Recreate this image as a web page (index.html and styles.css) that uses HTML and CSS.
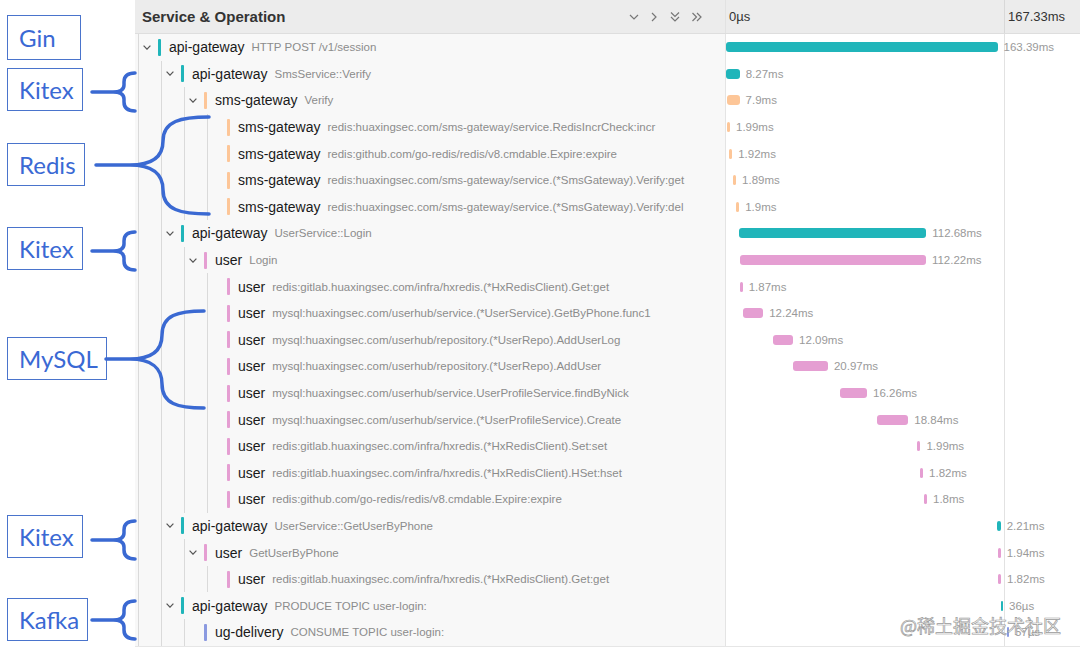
FILE: index.html
```html
<!DOCTYPE html>
<html lang="en">
  <head>
    <meta charset="utf-8" />
    <meta name="viewport" content="width=device-width, initial-scale=1" />
    <title>Trace Timeline</title>
    <link rel="stylesheet" href="styles.css">
  </head>
  <body>
    <div class="canvas">
      <!-- Framework notes on the left -->
      <div class="notes">
        <div class="note note-gin">Gin</div>
        <div class="note note-kitex-1">Kitex</div>
        <div class="note note-redis">Redis</div>
        <div class="note note-kitex-2">Kitex</div>
        <div class="note note-mysql">MySQL</div>
        <div class="note note-kitex-3">Kitex</div>
        <div class="note note-kafka">Kafka</div>
      </div>

      <div class="trace">
        <div class="trace-header">
          <div class="header-name">
            <span class="header-title">Service &amp; Operation</span>
            <div class="header-tools">
              <svg width="10" height="12" viewBox="0 0 10 12"><polyline points="1,4 5,8 9,4" /></svg>
              <svg width="10" height="12" viewBox="0 0 10 12"><polyline points="3,2 7,6 3,10" /></svg>
              <svg width="12" height="12" viewBox="0 0 12 12"><polyline points="2,1.5 6,5.5 10,1.5" /><polyline points="2,6 6,10 10,6" /></svg>
              <svg width="12" height="12" viewBox="0 0 12 12"><polyline points="1.5,2 5.5,6 1.5,10" /><polyline points="6,2 10,6 6,10" /></svg>
            </div>
          </div>
          <div class="header-timeline">
            <span class="header-start">0µs</span>
            <span class="header-end">167.33ms</span>
          </div>
        </div>
        <div id="traceRows" class="trace-rows"></div>
      </div>

      <!-- Braces pointing at the spans -->
      <svg class="braces" width="1080" height="655" viewBox="0 0 1080 655">
        <defs>
          <path id="smallBrace" d="M92,92 L113,92 M135,73 Q124,73 124,82 L124,85 Q124,92 113,92 Q124,92 124,99 L124,102 Q124,111 135,111" />
        </defs>
        <use href="#smallBrace" />
        <use href="#smallBrace" y="159" />
        <use href="#smallBrace" y="448" />
        <use href="#smallBrace" y="528" />
        <path d="M96,165 L132,165 M209,117 C181,117 163,121 163,141 C163,157 152,165 130,165 M209,214 C181,214 163,210 163,190 C163,174 152,165 130,165" />
        <path d="M106,359 L134,359 M204,311 C178,311 162,315 162,335 C162,351 151,359 130,359 M204,408 C178,408 162,404 162,384 C162,368 151,359 130,359" />
      </svg>

      <div class="watermark">@稀土掘金技术社区</div>
    </div>

    <script>
      const scale = 278 / 167.33;

      // level, has children, service, operation, color, start (ms), duration (ms), label
      const spans = [
        [0, true, "api-gateway", "HTTP POST /v1/session", "gateway", 0, 163.39, "163.39ms"],
        [1, true, "api-gateway", "SmsService::Verify", "gateway", 0, 8.27, "8.27ms"],
        [2, true, "sms-gateway", "Verify", "sms", 0.3, 7.9, "7.9ms"],
        [3, false, "sms-gateway", "redis:huaxingsec.com/sms-gateway/service.RedisIncrCheck:incr", "sms", 0.4, 1.99, "1.99ms"],
        [3, false, "sms-gateway", "redis:github.com/go-redis/redis/v8.cmdable.Expire:expire", "sms", 1.8, 1.92, "1.92ms"],
        [3, false, "sms-gateway", "redis:huaxingsec.com/sms-gateway/service.(*SmsGateway).Verify:get", "sms", 4.2, 1.89, "1.89ms"],
        [3, false, "sms-gateway", "redis:huaxingsec.com/sms-gateway/service.(*SmsGateway).Verify:del", "sms", 6.0, 1.9, "1.9ms"],
        [1, true, "api-gateway", "UserService::Login", "gateway", 7.8, 112.68, "112.68ms"],
        [2, true, "user", "Login", "user", 8.1, 112.22, "112.22ms"],
        [3, false, "user", "redis:gitlab.huaxingsec.com/infra/hxredis.(*HxRedisClient).Get:get", "user", 8.2, 1.87, "1.87ms"],
        [3, false, "user", "mysql:huaxingsec.com/userhub/service.(*UserService).GetByPhone.func1", "user", 10.2, 12.24, "12.24ms"],
        [3, false, "user", "mysql:huaxingsec.com/userhub/repository.(*UserRepo).AddUserLog", "user", 28.3, 12.09, "12.09ms"],
        [3, false, "user", "mysql:huaxingsec.com/userhub/repository.(*UserRepo).AddUser", "user", 40.4, 20.97, "20.97ms"],
        [3, false, "user", "mysql:huaxingsec.com/userhub/service.UserProfileService.findByNick", "user", 68.6, 16.26, "16.26ms"],
        [3, false, "user", "mysql:huaxingsec.com/userhub/service.(*UserProfileService).Create", "user", 90.9, 18.84, "18.84ms"],
        [3, false, "user", "redis:gitlab.huaxingsec.com/infra/hxredis.(*HxRedisClient).Set:set", "user", 115, 1.99, "1.99ms"],
        [3, false, "user", "redis:gitlab.huaxingsec.com/infra/hxredis.(*HxRedisClient).HSet:hset", "user", 116.8, 1.82, "1.82ms"],
        [3, false, "user", "redis:github.com/go-redis/redis/v8.cmdable.Expire:expire", "user", 119.2, 1.8, "1.8ms"],
        [1, true, "api-gateway", "UserService::GetUserByPhone", "gateway", 163.1, 2.21, "2.21ms"],
        [2, true, "user", "GetUserByPhone", "user", 163.4, 1.94, "1.94ms"],
        [3, false, "user", "redis:gitlab.huaxingsec.com/infra/hxredis.(*HxRedisClient).Get:get", "user", 163.7, 1.82, "1.82ms"],
        [1, true, "api-gateway", "PRODUCE TOPIC user-login:", "gateway", 165.5, 0.036, "36µs"],
        [2, false, "ug-delivery", "CONSUME TOPIC user-login:", "delivery", 169.1, 0.057, "57µs"],
      ];

      const chevron = `<svg width="8" height="5" viewBox="0 0 8 5"><polyline points="0.6,0.6 4,4.2 7.4,0.6" /></svg>`;

      // Render span rows
      const renderRows = () => {
        let rows = "";
        spans.forEach(([level, parent, service, op, color, start, dur, label]) => {
          let guides = "";
          for (let i = 0; i <= level; i++) {
            guides += `<span class="guide">${parent && i === level ? chevron : ""}</span>`;
          }
          const left = (start * scale).toFixed(1);
          const width = Math.max(2, dur * scale).toFixed(1);
          rows += `<div class="row">
<div class="row-name">
${guides}
<span class="span-mark ${color}"></span>
<span class="service">${service}</span>
<span class="operation">${op}</span>
</div>
<div class="row-timeline">
<span class="bar ${color}" style="margin-left: ${left}px; width: ${width}px"></span>
<span class="bar-label">${label}</span>
</div>
</div>`;
        });
        document.getElementById("traceRows").innerHTML = rows;
      };

      renderRows();
    </script>
  </body>
</html>
```

FILE: styles.css
```css
body {
  margin: 0;
  background: #fff;
  font-family: "Liberation Sans", Arial, Helvetica, sans-serif;
  color: #222;
}
.canvas {
  position: relative;
  display: flex;
  align-items: flex-start;
  width: 1080px;
  height: 655px;
  overflow: hidden;
}
.notes {
  position: relative;
  flex: none;
  width: 135px;
  height: 655px;
}
.note {
  position: absolute;
  left: 7px;
  height: 43px;
  min-width: 74px;
  box-sizing: border-box;
  padding: 0 8px 0 11px;
  display: flex;
  align-items: center;
  border: 1.5px solid #4a74cc;
  font-family: Lato, "Open Sans", sans-serif;
  font-size: 24px;
  color: #3a69d4;
  background: #fff;
}
.note-gin {
  top: 15px;
  height: 45px;
}
.note-kitex-1 {
  top: 68px;
}
.note-redis {
  top: 143px;
}
.note-kitex-2 {
  top: 227px;
}
.note-mysql {
  top: 337px;
}
.note-kitex-3 {
  top: 515px;
}
.note-kafka {
  top: 598px;
}
.braces {
  position: absolute;
  top: 0;
  left: 0;
  pointer-events: none;
}
.braces path,
.braces use {
  fill: none;
  stroke: #3a69d2;
  stroke-width: 3.5;
  stroke-linecap: round;
  stroke-linejoin: round;
}
.trace {
  flex: 1;
  background: #f8f8f8;
  border-bottom: 1px solid #e6e6e6;
}
.trace-header {
  display: flex;
  height: 34px;
  box-sizing: border-box;
  background: #ececec;
  border-bottom: 1px solid #dedede;
}
.header-name {
  flex: none;
  width: 590px;
  box-sizing: border-box;
  padding: 0 22px 0 7px;
  display: flex;
  align-items: center;
  justify-content: space-between;
}
.header-title {
  font-size: 15px;
  font-weight: bold;
  color: #333;
}
.header-tools {
  display: flex;
  align-items: center;
  gap: 10px;
}
.header-tools polyline {
  fill: none;
  stroke: #777;
  stroke-width: 1.2;
}
.header-timeline {
  flex: 1;
  display: flex;
  align-items: stretch;
  border-left: 1px solid #e2e2e2;
  font-size: 13px;
  color: #333;
}
.header-start {
  width: 278px;
  box-sizing: border-box;
  padding-left: 3px;
  display: flex;
  align-items: center;
}
.header-end {
  padding-left: 3px;
  display: flex;
  align-items: center;
  border-left: 1px solid #d8d8d8;
}
.row {
  display: flex;
  height: 26.6px;
}
.row-name {
  flex: none;
  width: 590px;
  display: flex;
  align-items: stretch;
  white-space: nowrap;
  overflow: hidden;
}
.guide {
  flex: none;
  width: 23px;
  display: flex;
  align-items: center;
  justify-content: center;
  background: linear-gradient(#dadada, #dadada) no-repeat 2.5px 0 / 1px 100%;
}
.guide polyline {
  fill: none;
  stroke: #555;
  stroke-width: 1.2;
}
.span-mark {
  flex: none;
  align-self: center;
  width: 3px;
  height: 17px;
  border-radius: 1px;
}
.service {
  align-self: center;
  margin-left: 8px;
  font-size: 14px;
  color: #1a1a1a;
}
.operation {
  align-self: center;
  margin-left: 7px;
  font-size: 11.5px;
  color: #8c8c8c;
}
.row-timeline {
  flex: 1;
  display: flex;
  align-items: center;
  border-left: 1px solid #e4e4e4;
  background: #fff linear-gradient(#e2e2e2, #e2e2e2) no-repeat 278px 0 / 1px 100%;
  white-space: nowrap;
}
.bar {
  flex: none;
  height: 10px;
  border-radius: 3px;
}
.bar-label {
  margin-left: 6px;
  font-size: 11.5px;
  color: #9a9a9a;
}
.gateway {
  background-color: #20b5ba;
}
.sms {
  background-color: #fdc698;
}
.user {
  background-color: #e59ed2;
}
.delivery {
  background-color: #8b9ae0;
}
.watermark {
  position: absolute;
  left: 900px;
  top: 612px;
  font-family: "Noto Sans CJK SC", sans-serif;
  font-size: 18px;
  color: rgba(255, 255, 255, 0.7);
  -webkit-text-stroke: 0.7px #9a9a9a;
  pointer-events: none;
}
```
